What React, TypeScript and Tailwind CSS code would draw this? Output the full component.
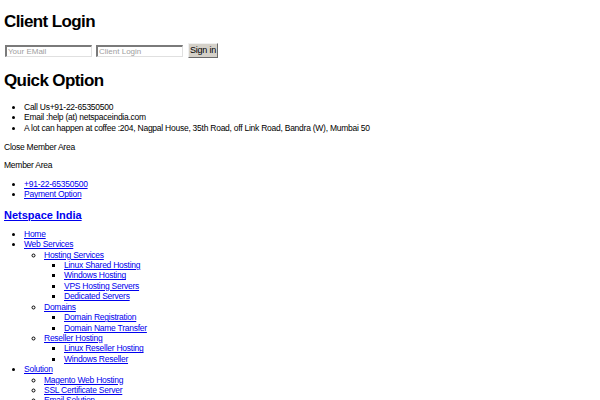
import React from "react";

const A = ({ children }: { children: React.ReactNode }) => (
  <a href="#" className="text-[#0000ee] underline">{children}</a>
);

export default function App() {
  return (
    <div className="min-h-[400px] bg-white px-[4px] pt-[11px] text-[8.5px] leading-[10.4px] tracking-[-0.25px] text-black" style={{ fontFamily: '"Liberation Sans", Arial, sans-serif' }}>
      <h2 className="text-[17px] leading-[21px] font-bold tracking-[-0.6px]">Client Login</h2>
      <form className="mt-[11px] flex items-center tracking-normal" onSubmit={(e) => e.preventDefault()}>
        <input
          placeholder="Your EMail"
          className="ml-[1px] h-[12px] w-[87px] border-t-2 border-l-2 border-r border-b border-t-[#7a7a7a] border-l-[#7a7a7a] border-r-[#e0e0e0] border-b-[#e0e0e0] bg-white px-[1px] text-[8px] leading-[8px] placeholder:text-[#a0a0a0]"
        />
        <input
          placeholder="Client Login"
          className="ml-[4px] h-[12px] w-[87px] border-t-2 border-l-2 border-r border-b border-t-[#7a7a7a] border-l-[#7a7a7a] border-r-[#e0e0e0] border-b-[#e0e0e0] bg-white px-[1px] text-[8px] leading-[8px] placeholder:text-[#a0a0a0]"
        />
        <button
          type="submit"
          className="ml-[5px] h-[15px] w-[30px] border border-t-[#f0f0f0] border-l-[#f0f0f0] border-r-[#6a6a6a] border-b-[#6a6a6a] bg-[#d4d0c8] text-[9px] leading-[9px] tracking-[-0.2px]"
        >
          Sign in
        </button>
      </form>
      <h2 className="mt-[12px] text-[17px] leading-[21px] font-bold tracking-[-0.6px]">Quick Option</h2>
      <ul className="mt-[11px] list-disc pl-[20px]">
        <li>Call Us+91-22-65350500</li>
        <li>Email :help (at) netspaceindia.com</li>
        <li>A lot can happen at coffee :204, Nagpal House, 35th Road, off Link Road, Bandra (W), Mumbai 50</li>
      </ul>
      <p className="mt-[9px]">Close Member Area</p>
      <p className="mt-[7px]">Member Area</p>
      <ul className="mt-[9px] list-disc pl-[20px]">
        <li><A>+91-22-65350500</A></li>
        <li><A>Payment Option</A></li>
      </ul>
      <h3 className="mt-[9px] text-[11px] leading-[13px] font-bold tracking-normal"><A>Netspace India</A></h3>
      <ul className="mt-[7px] list-disc pl-[20px]">
        <li><A>Home</A></li>
        <li>
          <A>Web Services</A>
          <ul className="list-[circle] pl-[20px]">
            <li>
              <A>Hosting Services</A>
              <ul className="list-[square] pl-[20px]">
                <li><A>Linux Shared Hosting</A></li>
                <li><A>Windows Hosting</A></li>
                <li><A>VPS Hosting Servers</A></li>
                <li><A>Dedicated Servers</A></li>
              </ul>
            </li>
            <li>
              <A>Domains</A>
              <ul className="list-[square] pl-[20px]">
                <li><A>Domain Registration</A></li>
                <li><A>Domain Name Transfer</A></li>
              </ul>
            </li>
            <li>
              <A>Reseller Hosting</A>
              <ul className="list-[square] pl-[20px]">
                <li><A>Linux Reseller Hosting</A></li>
                <li><A>Windows Reseller</A></li>
              </ul>
            </li>
          </ul>
        </li>
        <li>
          <A>Solution</A>
          <ul className="list-[circle] pl-[20px]">
            <li><A>Magento Web Hosting</A></li>
            <li><A>SSL Certificate Server</A></li>
            <li><A>Email Solution</A></li>
          </ul>
        </li>
      </ul>
    </div>
  );
}
